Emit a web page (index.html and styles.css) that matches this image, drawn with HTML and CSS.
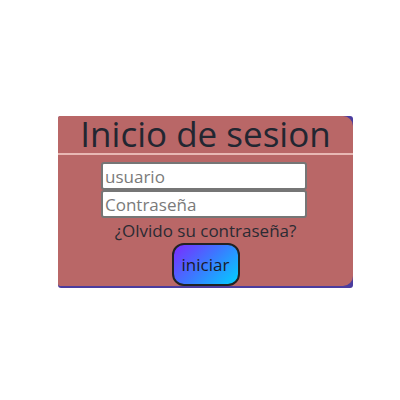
FILE: index.html
```html
<!DOCTYPE html>
<html>
<head>
<meta charset="utf-8">
<link rel="stylesheet" href="styles.css">
</head>
<body>
<div class="frame">
  <form class="card">
    <h1 class="title">Inicio de sesion</h1>
    <div class="fields">
      <input class="field" type="text" placeholder="usuario">
      <input class="field" type="password" placeholder="Contraseña">
      <a class="forgot">¿Olvido su contraseña?</a>
      <button class="btn" type="button">iniciar</button>
    </div>
  </form>
</div>
</body>
</html>
```
FILE: styles.css
```css
html, body {
  margin: 0;
  padding: 0;
  background: #ffffff;
}
body {
  font-family: "Open Sans", "DejaVu Sans", sans-serif;
  padding-top: 116px;
  padding-left: 58px;
}
.frame {
  width: 295px;
  background: #4b3c9e;
  border-radius: 3px;
  padding-bottom: 2px;
}
.card {
  background: #b96767;
  border-radius: 2px 10px 10px 2px;
  margin: 0;
  padding-bottom: 0;
}
.title {
  margin: 0;
  font-weight: 400;
  font-size: 35px;
  line-height: 36px;
  color: #222631;
  text-align: center;
  padding-bottom: 1px;
  border-bottom: 2px solid #e8b8b4;
}
.fields {
  display: flex;
  flex-direction: column;
  align-items: center;
  padding-top: 7px;
}
.field {
  box-sizing: border-box;
  width: 206px;
  height: 28px;
  margin: 0 0 0 -3px;
  border: 2px solid #767676;
  border-radius: 3px;
  background: #ffffff;
  font-family: inherit;
  font-size: 17px;
  padding: 0 2px;
  color: #333;
}
.field::placeholder {
  color: #7a7a7a;
}
.forgot {
  font-size: 17px;
  line-height: 20px;
  color: #2b2b33;
  margin-top: 3px;
}
.btn {
  box-sizing: border-box;
  width: 68px;
  height: 43px;
  margin-top: 2px;
  border: 2px solid #222;
  border-radius: 12px;
  background: linear-gradient(135deg, #7b2bff 0%, #3a7bff 50%, #00d0ff 100%);
  font-family: inherit;
  font-size: 17px;
  color: #1a1a2a;
  padding: 0;
}
```
